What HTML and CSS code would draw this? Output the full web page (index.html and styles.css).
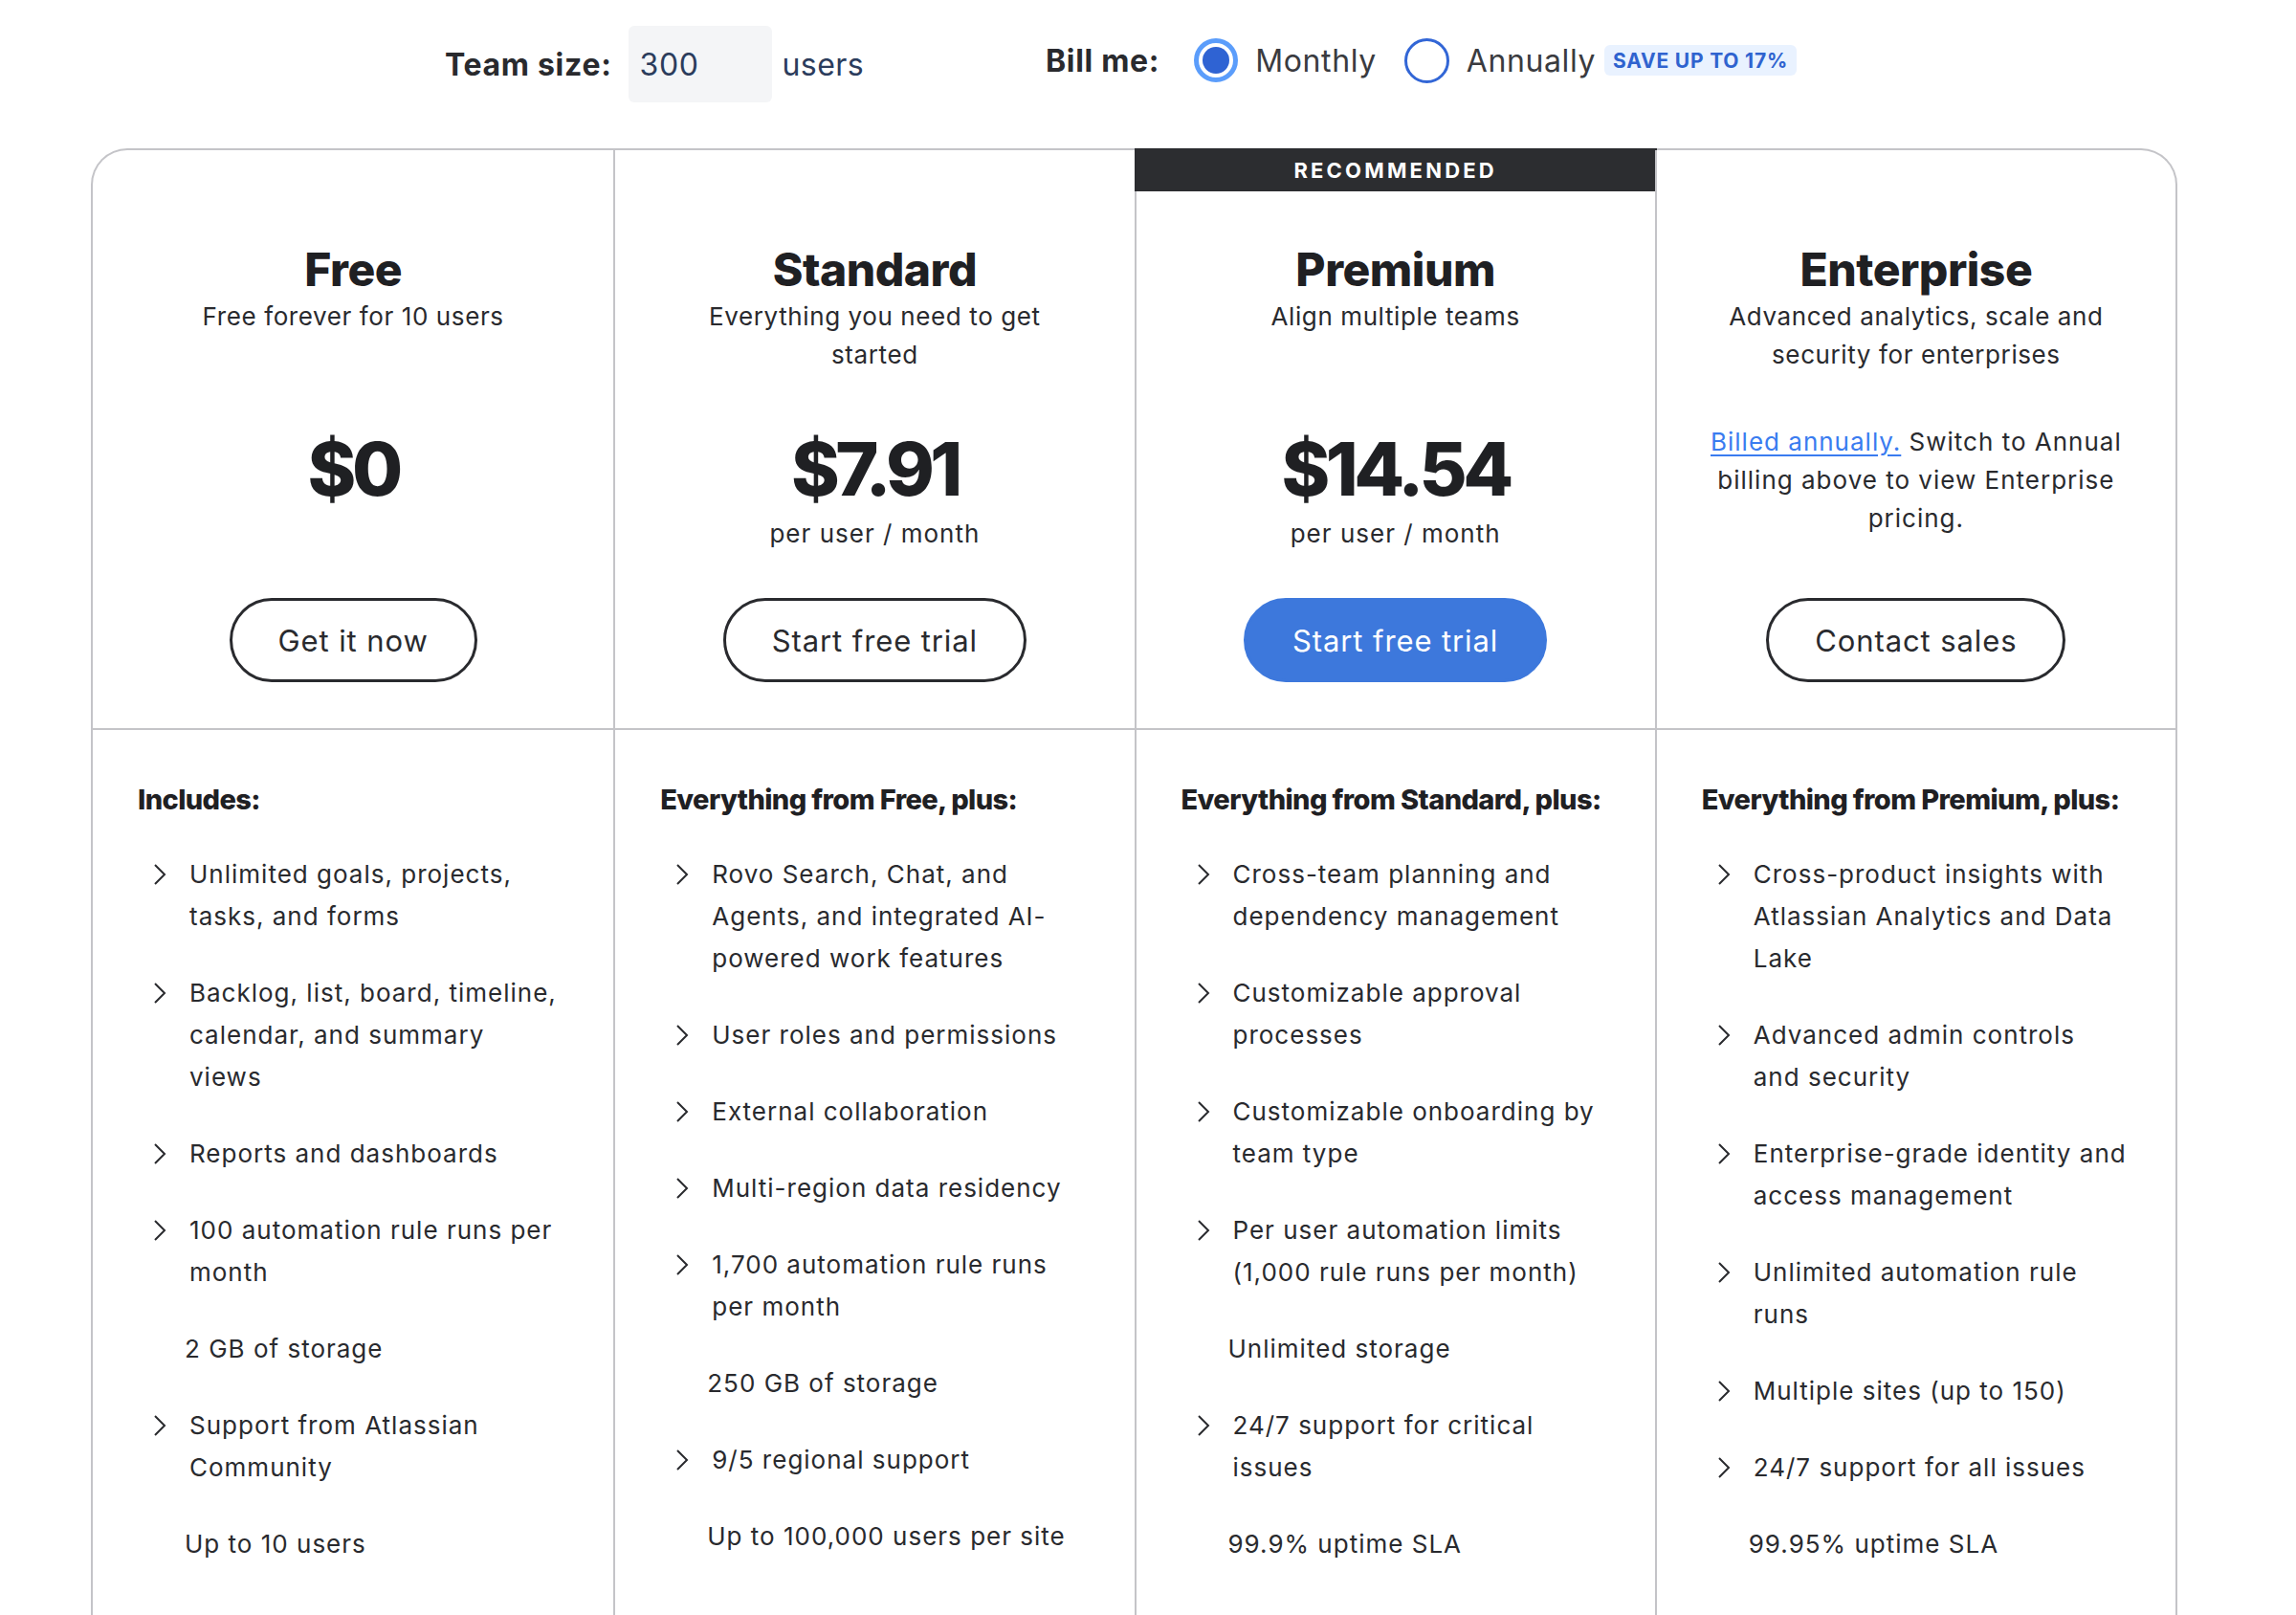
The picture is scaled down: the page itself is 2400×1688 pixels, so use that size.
FILE: index.html
```html
<!DOCTYPE html>
<html lang="en">
<head>
<meta charset="utf-8">
<title>Pricing</title>
<link rel="stylesheet" href="styles.css">
</head>
<body>
<div class="controls">
  <div class="team">
    <span class="lbl">Team size:</span>
    <div class="size-input">300</div>
    <span class="unit">users</span>
  </div>
  <div class="bill">
    <span class="lbl bill-lbl">Bill me:</span>
    <span class="radio radio-on"><span class="dot"></span></span>
    <span class="opt opt-monthly">Monthly</span>
    <span class="radio radio-off"></span>
    <span class="opt">Annually</span>
    <span class="badge">SAVE UP TO 17%</span>
  </div>
</div>

<div class="card">
  <!-- FREE -->
  <div class="col">
    <div class="top">
      <div class="head">
        <h2 class="plan">Free</h2>
        <p class="sub">Free forever for 10 users</p>
      </div>
      <div class="price-area">
        <div class="price">$0</div>
      </div>
      <a class="btn btn-outline">Get it now</a>
    </div>
    <div class="bottom">
      <h3 class="feat-title">Includes:</h3>
      <ul class="feats">
        <li class="feat"><svg class="chev" viewBox="0 0 14 24"><path d="M2 2 L12 12 L2 22"/></svg><span>Unlimited goals, projects,<br>tasks, and forms</span></li>
        <li class="feat"><svg class="chev" viewBox="0 0 14 24"><path d="M2 2 L12 12 L2 22"/></svg><span>Backlog, list, board, timeline,<br>calendar, and summary<br>views</span></li>
        <li class="feat"><svg class="chev" viewBox="0 0 14 24"><path d="M2 2 L12 12 L2 22"/></svg><span>Reports and dashboards</span></li>
        <li class="feat"><svg class="chev" viewBox="0 0 14 24"><path d="M2 2 L12 12 L2 22"/></svg><span>100 automation rule runs per<br>month</span></li>
        <li class="plain">2 GB of storage</li>
        <li class="feat"><svg class="chev" viewBox="0 0 14 24"><path d="M2 2 L12 12 L2 22"/></svg><span>Support from Atlassian<br>Community</span></li>
        <li class="plain">Up to 10 users</li>
      </ul>
    </div>
  </div>

  <!-- STANDARD -->
  <div class="col">
    <div class="top">
      <div class="head">
        <h2 class="plan">Standard</h2>
        <p class="sub">Everything you need to get<br>started</p>
      </div>
      <div class="price-area">
        <div class="price">$7.91</div>
        <div class="per">per user / month</div>
      </div>
      <a class="btn btn-outline">Start free trial</a>
    </div>
    <div class="bottom">
      <h3 class="feat-title">Everything from Free, plus:</h3>
      <ul class="feats">
        <li class="feat"><svg class="chev" viewBox="0 0 14 24"><path d="M2 2 L12 12 L2 22"/></svg><span>Rovo Search, Chat, and<br>Agents, and integrated AI-<br>powered work features</span></li>
        <li class="feat"><svg class="chev" viewBox="0 0 14 24"><path d="M2 2 L12 12 L2 22"/></svg><span>User roles and permissions</span></li>
        <li class="feat"><svg class="chev" viewBox="0 0 14 24"><path d="M2 2 L12 12 L2 22"/></svg><span>External collaboration</span></li>
        <li class="feat"><svg class="chev" viewBox="0 0 14 24"><path d="M2 2 L12 12 L2 22"/></svg><span>Multi-region data residency</span></li>
        <li class="feat"><svg class="chev" viewBox="0 0 14 24"><path d="M2 2 L12 12 L2 22"/></svg><span>1,700 automation rule runs<br>per month</span></li>
        <li class="plain">250 GB of storage</li>
        <li class="feat"><svg class="chev" viewBox="0 0 14 24"><path d="M2 2 L12 12 L2 22"/></svg><span>9/5 regional support</span></li>
        <li class="plain">Up to 100,000 users per site</li>
      </ul>
    </div>
  </div>

  <!-- PREMIUM -->
  <div class="col col-premium">
    <div class="top top-premium">
      <div class="band">RECOMMENDED</div>
      <div class="head">
        <h2 class="plan">Premium</h2>
        <p class="sub">Align multiple teams</p>
      </div>
      <div class="price-area">
        <div class="price">$14.54</div>
        <div class="per">per user / month</div>
      </div>
      <a class="btn btn-primary">Start free trial</a>
    </div>
    <div class="bottom">
      <h3 class="feat-title">Everything from Standard, plus:</h3>
      <ul class="feats">
        <li class="feat"><svg class="chev" viewBox="0 0 14 24"><path d="M2 2 L12 12 L2 22"/></svg><span>Cross-team planning and<br>dependency management</span></li>
        <li class="feat"><svg class="chev" viewBox="0 0 14 24"><path d="M2 2 L12 12 L2 22"/></svg><span>Customizable approval<br>processes</span></li>
        <li class="feat"><svg class="chev" viewBox="0 0 14 24"><path d="M2 2 L12 12 L2 22"/></svg><span>Customizable onboarding by<br>team type</span></li>
        <li class="feat"><svg class="chev" viewBox="0 0 14 24"><path d="M2 2 L12 12 L2 22"/></svg><span>Per user automation limits<br>(1,000 rule runs per month)</span></li>
        <li class="plain">Unlimited storage</li>
        <li class="feat"><svg class="chev" viewBox="0 0 14 24"><path d="M2 2 L12 12 L2 22"/></svg><span>24/7 support for critical<br>issues</span></li>
        <li class="plain">99.9% uptime SLA</li>
      </ul>
    </div>
  </div>

  <!-- ENTERPRISE -->
  <div class="col col-after-premium">
    <div class="top">
      <div class="head">
        <h2 class="plan">Enterprise</h2>
        <p class="sub">Advanced analytics, scale and<br>security for enterprises</p>
      </div>
      <div class="price-area">
        <p class="note"><a class="link">Billed annually.</a> Switch to Annual<br>billing above to view Enterprise<br>pricing.</p>
      </div>
      <a class="btn btn-outline">Contact sales</a>
    </div>
    <div class="bottom">
      <h3 class="feat-title">Everything from Premium, plus:</h3>
      <ul class="feats">
        <li class="feat"><svg class="chev" viewBox="0 0 14 24"><path d="M2 2 L12 12 L2 22"/></svg><span>Cross-product insights with<br>Atlassian Analytics and Data<br>Lake</span></li>
        <li class="feat"><svg class="chev" viewBox="0 0 14 24"><path d="M2 2 L12 12 L2 22"/></svg><span>Advanced admin controls<br>and security</span></li>
        <li class="feat"><svg class="chev" viewBox="0 0 14 24"><path d="M2 2 L12 12 L2 22"/></svg><span>Enterprise-grade identity and<br>access management</span></li>
        <li class="feat"><svg class="chev" viewBox="0 0 14 24"><path d="M2 2 L12 12 L2 22"/></svg><span>Unlimited automation rule<br>runs</span></li>
        <li class="feat"><svg class="chev" viewBox="0 0 14 24"><path d="M2 2 L12 12 L2 22"/></svg><span>Multiple sites (up to 150)</span></li>
        <li class="feat"><svg class="chev" viewBox="0 0 14 24"><path d="M2 2 L12 12 L2 22"/></svg><span>24/7 support for all issues</span></li>
        <li class="plain">99.95% uptime SLA</li>
      </ul>
    </div>
  </div>
</div>
</body>
</html>
```

FILE: styles.css
```css
* { box-sizing: border-box; }

body {
  margin: 0;
  background: #ffffff;
  color: #292a2e;
  font-family: Inter, "Noto Sans", "Liberation Sans", sans-serif;
}

/* ---------- top controls ---------- */
.controls {
  width: 2181px;
  margin-left: 95px;
  padding-top: 27px;
  padding-right: 28px;
  height: 155px;
  display: flex;
  justify-content: center;
  align-items: flex-start;
  gap: 190px;
}

.team, .bill {
  display: flex;
  align-items: center;
  height: 80px;
  font-size: 32px;
  letter-spacing: 0.6px;
}

.bill { margin-top: -4px; }

.lbl {
  font-weight: 700;
  color: #292a2e;
  letter-spacing: 0.7px;
}

.team .lbl { margin-right: 17px; }

.size-input {
  width: 150px;
  height: 80px;
  background: #f4f5f7;
  border-radius: 6px;
  padding-left: 12px;
  display: flex;
  align-items: center;
  color: #2b3c5c;
  margin-right: 11px;
}

.unit { color: #2b3c5c; letter-spacing: 0.4px; }

.bill-lbl { margin-right: 36px; }

.radio {
  width: 46px;
  height: 46px;
  border-radius: 50%;
  display: flex;
  align-items: center;
  justify-content: center;
  flex: none;
}

.radio-on {
  border: 5px solid #5b9dfb;
}

.radio-on .dot {
  width: 28px;
  height: 28px;
  border-radius: 50%;
  background: #2f63d3;
}

.radio-off {
  width: 47px;
  height: 47px;
  border: 3.5px solid #3266d6;
}

.opt {
  color: #3a3b3f;
  margin-left: 18px;
}

.opt-monthly { margin-right: 29px; }

.bill .opt:last-of-type { letter-spacing: 0.3px; }

.badge {
  margin-left: 9px;
  height: 32px;
  padding: 0 9px;
  display: flex;
  align-items: center;
  background: #e9f2ff;
  color: #2f63cf;
  border-radius: 6px;
  font-size: 21px;
  font-weight: 700;
  letter-spacing: 0.8px;
}

/* ---------- card ---------- */
.card {
  width: 2181px;
  margin-left: 95px;
  border: 2px solid #c4c4c8;
  border-bottom: none;
  border-radius: 38px 38px 0 0;
  display: grid;
  grid-template-columns: repeat(4, 1fr);
}

.col + .col { border-left: 2px solid #c4c4c8; }

.col-premium,
.col-after-premium { border-left: 2px solid #2c2d30; }

.top {
  height: 606px;
  border-bottom: 2px solid #c4c4c8;
  padding: 96px 40px 0;
  display: flex;
  flex-direction: column;
  align-items: center;
  text-align: center;
}

.top-premium { padding-top: 0; }

.band {
  align-self: stretch;
  margin: -2px -42px 53px;
  height: 45px;
  background: #2c2d30;
  color: #ffffff;
  font-size: 22px;
  font-weight: 700;
  letter-spacing: 3.2px;
  display: flex;
  align-items: center;
  justify-content: center;
}

.head { height: 189px; }

.plan {
  margin: 0;
  font-size: 48px;
  line-height: 58px;
  font-weight: 800;
  letter-spacing: -0.5px;
  color: #1f2023;
}

.sub {
  margin: 0;
  font-size: 26px;
  line-height: 40px;
  letter-spacing: 0.6px;
  color: #292a2e;
}

.price-area { height: 183px; }

.price {
  font-size: 77px;
  line-height: 96px;
  font-weight: 800;
  letter-spacing: -4.5px;
  color: #1f2023;
}

.per {
  font-size: 26px;
  line-height: 40px;
  letter-spacing: 1px;
}

.note {
  margin: 0;
  font-size: 26px;
  line-height: 40px;
  letter-spacing: 1px;
  white-space: nowrap;
}

.link {
  color: #3a7cf0;
  text-decoration: underline;
  text-underline-offset: 4px;
}

.btn {
  height: 88px;
  padding: 0 48px;
  border-radius: 44px;
  display: inline-flex;
  align-items: center;
  justify-content: center;
  font-size: 31px;
  letter-spacing: 0.9px;
  white-space: nowrap;
}

.btn-outline {
  border: 3px solid #292a2e;
  color: #292a2e;
  background: #ffffff;
}

.btn-primary {
  border: 3px solid #3d78dc;
  background: #3d78dc;
  color: #ffffff;
}

/* ---------- features ---------- */
.bottom {
  padding: 53px 30px 120px 47px;
}

.feat-title {
  margin: 0 0 36px;
  font-size: 29px;
  line-height: 40px;
  font-weight: 800;
  letter-spacing: -0.6px;
  color: #1f2023;
}

.feats {
  list-style: none;
  margin: 0;
  padding: 0;
  display: flex;
  flex-direction: column;
  gap: 36px;
  font-size: 26px;
  line-height: 44px;
  letter-spacing: 1px;
  color: #292a2e;
}

.feat {
  display: flex;
  align-items: flex-start;
  white-space: nowrap;
}

.chev {
  flex: none;
  width: 14px;
  height: 24px;
  margin: 10px 24px 0 16px;
}

.chev path {
  fill: none;
  stroke: #292a2e;
  stroke-width: 2;
}

.plain {
  padding-left: 49px;
  white-space: nowrap;
}
```
